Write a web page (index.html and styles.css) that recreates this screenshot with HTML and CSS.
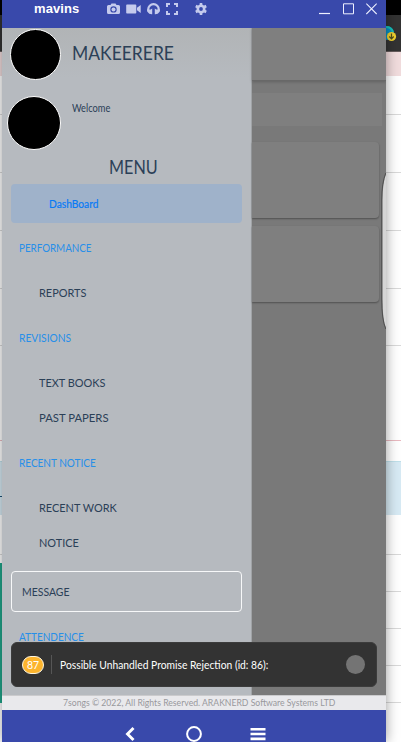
FILE: index.html
```html
<!DOCTYPE html>
<html lang="en">
<head>
<meta charset="utf-8">
<title>mavins</title>
<link rel="stylesheet" href="styles.css">
</head>
<body>
<div class="desktop">
  <div class="band black"></div>
  <div class="band toolbar">
    <svg width="19" height="20" viewBox="0 0 19 20"><circle cx="5" cy="9" r="7" fill="#078fc4"/><path d="M4 3c4 0 6 2 7 5" stroke="#18c4b5" stroke-width="2" fill="none"/><circle cx="9.500" cy="12.500" r="4.600" fill="#f2d32f"/><path d="M9.500 9.500v5M7.300 12.500l2.200 2.400 2.200-2.400" stroke="#51501e" stroke-width="1.200" fill="none"/></svg>
  </div>
  <div class="band pink"></div>
  <div class="band row h39"></div>
  <div class="band row h58"></div>
  <div class="band row h58"></div>
  <div class="band row h58"></div>
  <div class="band row h57"></div>
  <div class="band row rose"></div>
  <div class="band h20"></div>
  <div class="band blue"><i class="rule"></i></div>
  <div class="band row h40"></div>
  <div class="band row h37"><i class="green first"></i></div>
  <div class="band row h37"><i class="green"></i></div>
  <div class="band row h37"><i class="green"></i></div>
  <div class="band row h37"><i class="green"></i></div>
  <div class="band h39"></div>
</div>

<main class="window">
  <header class="titlebar">
    <b class="title">mavins</b>
    <div class="tools">
      <svg width="13" height="12" viewBox="0 0 13 12"><path fill-rule="evenodd" fill="currentColor" d="M1.500 2H3.500L4.500.5h4L9.500 2h2Q13 2 13 3.500v6Q13 11 11.500 11h-10Q0 11 0 9.500v-6Q0 2 1.500 2ZM6.500 3.200a3.200 3.200 0 1 0 0 6.400a3.200 3.200 0 1 0 0-6.400Z"/><circle cx="6.500" cy="6.400" r="2" fill="currentColor"/></svg>
      <svg width="15" height="12" viewBox="0 0 15 12"><path fill="currentColor" d="M1 1.500h8.500q.8 0 .8.800v7.400q0 .8-.8.800H1q-.8 0-.8-.8V2.300q0-.8.800-.8ZM11 4.700l3.700-2.700v8L11 7.300Z"/></svg>
      <svg width="13" height="12" viewBox="0 0 13 12"><path d="M1.200 8.500V6.500a5.200 5.200 0 0 1 10.600 0v2" fill="none" stroke="currentColor" stroke-width="2.200"/><path fill="currentColor" d="M.2 6.500h3.500L5.200 5.500v5.800Q2 11.500.6 9ZM12.800 6.500H9.300L7.800 5.500v5.800q3.200.2 4.600-2.300Z"/></svg>
      <svg width="12" height="12" viewBox="0 0 12 12"><path d="M1 4V1h3M8 1h3v3M11 8v3H8M4 11H1V8" fill="none" stroke="currentColor" stroke-width="2"/></svg>
      <svg class="gear" width="12" height="12" viewBox="0 0 12 12"><circle cx="6" cy="6" r="3.200" fill="none" stroke="currentColor" stroke-width="2.600"/><path d="M6 0v2M6 10v2M.8 3l1.800 1M9.400 8l1.800 1M.8 9l1.800-1M9.400 4l1.800-1" stroke="currentColor" stroke-width="2.600"/></svg>
    </div>
    <div class="controls">
      <svg width="11" height="12" viewBox="0 0 11 12"><path d="M0 10.500h11" stroke="currentColor" stroke-width="1.200"/></svg>
      <svg width="11" height="12" viewBox="0 0 11 12"><path d="M.5.800h10v10H.5Z" fill="none" stroke="currentColor"/></svg>
      <svg width="11" height="12" viewBox="0 0 11 12"><path d="M.3.600l10.400 10.400M10.700.6L.3 11" stroke="currentColor" stroke-width="1.100"/></svg>
    </div>
  </header>

  <div class="screen">
    <aside class="drawer">
      <div class="profile school"><span class="avatar"></span><span class="name">MAKEERERE</span></div>
      <div class="profile user"><span class="avatar large"></span><span class="welcome">Welcome</span></div>
      <h1 class="menu-title"><span>MENU</span></h1>
      <nav>
        <a class="active"><span>DashBoard</span></a>
        <h2 class="top"><span class="w-performance">PERFORMANCE</span></h2>
        <a class="item"><span>REPORTS</span></a>
        <h2><span class="w-revisions">REVISIONS</span></h2>
        <a class="item"><span>TEXT BOOKS</span></a>
        <a class="item"><span class="w-papers">PAST PAPERS</span></a>
        <h2><span>RECENT NOTICE</span></h2>
        <a class="item"><span>RECENT WORK</span></a>
        <a class="item"><span>NOTICE</span></a>
        <a class="message"><span>MESSAGE</span></a>
        <h2 class="top"><span>ATTENDENCE</span></h2>
      </nav>
    </aside>
    <section class="content">
      <div class="appbar"></div>
      <div class="search"></div>
      <div class="card"></div>
      <div class="card second"></div>
    </section>
    <svg class="edge" width="5" height="158" viewBox="0 0 5 158"><path d="M5 1Q1.500 10 1.500 27V126Q1.500 147 5 155Z" fill="#d5d5d5"/><path d="M4.800 0Q.7 10 .7 27V126Q.7 147 4.800 156" fill="none" stroke="#4f4f4f" stroke-width="1"/></svg>
    <div class="toast">
      <span class="count">87</span>
      <span class="divider"></span>
      <span class="error">Possible Unhandled Promise Rejection (id: 86):</span>
      <span class="dismiss"></span>
    </div>
  </div>

  <footer class="copyright"><span>7songs © 2022, All Rights Reserved. ARAKNERD Software Systems LTD</span></footer>
  <div class="navbar">
    <svg width="10" height="16" viewBox="0 0 10 16"><path d="M8.500 2L2.500 8l6 6" fill="none" stroke="#fff" stroke-width="2.900"/></svg>
    <svg width="16" height="16" viewBox="0 0 16 16"><circle cx="8" cy="8" r="6.900" fill="none" stroke="#fff" stroke-width="2"/></svg>
    <svg width="16" height="16" viewBox="0 0 16 16"><path d="M.5 3.200h15M.5 8h15M.5 12.900h15" stroke="#fff" stroke-width="2.600"/></svg>
  </div>
</main>
</body>
</html>
```

FILE: styles.css
```css
* { box-sizing: border-box; }
body {
  margin: 0;
  position: relative;
  width: 401px;
  height: 742px;
  overflow: hidden;
  background: #fff;
  color: #2b4057;
  font-family: Lato, "Open Sans", sans-serif;
}
svg { display: block; flex: none; }
h1, h2 { margin: 0; font-weight: 400; }

/* page behind the window */
.desktop { display: flex; flex-direction: column; height: 742px; }
.band { flex: none; background: #fff; }
.black { height: 15px; background: #000; }
.toolbar { height: 37px; background: #333; border-bottom: 1px solid #665c5c; display: flex; justify-content: flex-end; padding-top: 9px; }
.pink { height: 24px; background: #f1dcdd; }
.row { border-bottom: 1px solid #d9d9d9; }
.h20 { height: 20px; }
.h37 { height: 37px; }
.h39 { height: 39px; }
.h40 { height: 40px; }
.h57 { height: 57px; }
.h58 { height: 58px; }
.rose { height: 95px; border-bottom-color: #e9b9c0; }
.blue { height: 54px; padding-top: 34px; background: #d7eaf4; border-top: 1px solid #bfe0ea; }
.rule { display: block; width: 2px; height: 1px; background: #1c5078; }
.green { display: block; width: 2px; height: 37px; background: #20a58a; }
.green.first { margin-top: 8px; height: 29px; }

/* window */
.window {
  position: absolute;
  left: 2px;
  top: 0;
  width: 384px;
  height: 742px;
  display: flex;
  flex-direction: column;
  box-shadow: 0 0 12px rgba(0, 0, 0, .4);
}
.titlebar { flex: none; height: 28px; background: #3949ab; display: flex; align-items: flex-start; color: #c5cbed; }
.title { width: 74px; margin-left: 32px; font: bold 13px/17px "Liberation Sans", sans-serif; color: #fff; letter-spacing: .1px; }
.tools { display: flex; padding-top: 3px; gap: 6px; width: 100px; margin-left: -1px; }
.tools .gear { margin-left: 11px; }
.controls { display: flex; gap: 12.500px; margin: 3px 9px 0 auto; color: #edf0ff; }

.screen { position: relative; flex: none; height: 667px; display: flex; background: #797979; overflow: hidden; }
.drawer { flex: none; width: 250px; background: linear-gradient(#b1b4b6, #b6babf 50px); border-right: 1px solid #a0a3a6; }
.profile { display: flex; align-items: flex-start; }
.school { height: 68px; padding: 1px 0 0 8px; }
.user { height: 59px; padding-left: 5px; }
.avatar { flex: none; width: 51px; height: 51px; border-radius: 50%; background: #000; border: 1px solid #fff; }
.large { width: 54px; height: 54px; }

/* condensed lettering */
.name, .welcome, .menu-title span, nav span, .error, .copyright span {
  display: inline-block;
  transform: scaleX(.91);
  transform-origin: left center;
}
.name { margin: 12px 0 0 11px; font-size: 18.500px; line-height: 24px; transform: scaleX(.945); }
.welcome { margin: 4px 0 0 11px; font-size: 10.500px; line-height: 16px; transform: scaleX(.885); }
.menu-title { height: 29px; font-size: 18.500px; line-height: 25px; padding-left: 107px; }
.menu-title span { transform: scaleX(.875); }
nav { display: flex; flex-direction: column; }
nav a, nav h2 { display: flex; align-items: center; white-space: nowrap; }
.active { height: 39px; margin: 0 9px; padding-left: 38px; border-radius: 4px; background: #9fb2ca; color: #087af5; font-size: 11px; -webkit-text-stroke: .2px; }
.active span { transform: scaleX(.93); }
nav h2 { height: 55px; padding-left: 17px; color: #278fe9; font-size: 11px; }
nav h2.top { margin-top: -3px; }
.item { height: 35px; padding-left: 37px; font-size: 12px; }
.message { height: 41px; margin: 11px 9px 0; padding-left: 10px; border: 1.500px solid #f7f8f9; border-radius: 4px; font-size: 11.500px; }
nav .w-performance { transform: scaleX(.89); }
nav .w-revisions { transform: scaleX(.93); }
nav .w-papers { transform: scaleX(.94); }

.content { flex: 1; min-width: 0; }
.appbar { height: 53px; background: #7f7f7f; border-bottom: 1px solid #686868; box-shadow: 0 1px 3px rgba(0, 0, 0, .2); }
.search { height: 33px; margin: 12px 4px 0 0; background: #7f7f7f; }
.card { height: 76px; margin: 16px 7px 0 0; background: #7f7f7f; border-radius: 0 4px 4px 0; box-shadow: 0 1px 2px rgba(0, 0, 0, .35); }
.second { margin-top: 8px; }
.edge { position: absolute; right: 0; top: 145px; }

.toast {
  position: absolute;
  left: 9px;
  top: 614px;
  width: 366px;
  height: 45px;
  display: flex;
  align-items: center;
  padding: 0 12px 0 10px;
  border: 1px solid #3c3c3c;
  border-radius: 6px;
  background: #333;
  color: #fff;
}
.count { flex: none; width: 22px; height: 18px; display: flex; align-items: center; justify-content: center; border: 1.500px solid #fff6df; border-radius: 9px; background: #fcb42d; font-size: 10.500px; }
.divider { flex: none; width: 1px; height: 19px; margin: 0 8px 0 7px; background: #565656; }
.error { font-size: 11px; white-space: nowrap; transform: scaleX(.935); }
.dismiss { flex: none; width: 19px; height: 19px; margin-left: auto; margin-right: -1px; border-radius: 50%; background: #747474; }

.copyright { flex: none; height: 15px; background: #e9e9ec; border-top: 1px solid #cbcbcd; color: #98989c; font-size: 9.500px; line-height: 14px; padding-left: 61px; white-space: nowrap; }
.navbar { flex: none; height: 32px; background: #3949ab; display: flex; align-items: flex-start; padding: 16px 0 0 123px; gap: 51px; }
.navbar svg:nth-child(2) { margin-right: -3px; }
```
